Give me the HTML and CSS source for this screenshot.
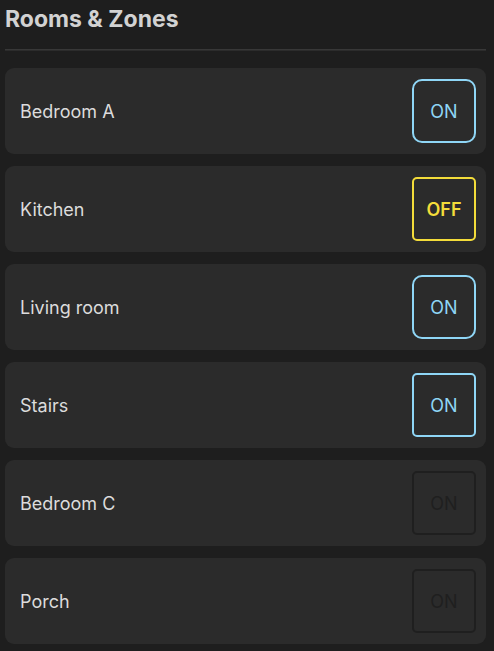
FILE: index.html
```
<!DOCTYPE html>
<html>
<head>
<meta charset="utf-8">
<link rel="stylesheet" href="styles.css">
</head>
<body>
<div class="panel">
  <h1 class="title">Rooms &amp; Zones</h1>
  <div class="divider"></div>
  <div class="list">
    <div class="card"><span class="name">Bedroom A</span><span class="btn on round">ON</span></div>
    <div class="card"><span class="name">Kitchen</span><span class="btn off">OFF</span></div>
    <div class="card"><span class="name">Living room</span><span class="btn on round">ON</span></div>
    <div class="card"><span class="name">Stairs</span><span class="btn on">ON</span></div>
    <div class="card"><span class="name">Bedroom C</span><span class="btn dim">ON</span></div>
    <div class="card"><span class="name">Porch</span><span class="btn dim">ON</span></div>
  </div>
</div>
</body>
</html>
```
FILE: styles.css
```
html, body {
  margin: 0;
  padding: 0;
  background: #1e1e1e;
}
body {
  font-family: Inter, "Liberation Sans", Arial, sans-serif;
  color: #dcdcdc;
}
.panel {
  padding: 0 8px 0 5px;
}
.title {
  margin: 0;
  padding-top: 6px;
  font-size: 23px;
  line-height: 26px;
  font-weight: bold;
  color: #d2d2d2;
}
.divider {
  margin-top: 17px;
  height: 0;
  border-top: 1px solid #383838;
  border-bottom: 1px solid #2c2c2c;
}
.list {
  margin-top: 17px;
  display: flex;
  flex-direction: column;
  gap: 12px;
}
.card {
  background: #2b2b2b;
  border-radius: 9px;
  height: 86px;
  box-sizing: border-box;
  padding: 0 10px 0 15px;
  display: flex;
  align-items: center;
  justify-content: space-between;
}
.name {
  font-size: 18px;
  color: #dcdcdc;
}
.btn {
  width: 64px;
  height: 64px;
  box-sizing: border-box;
  border: 2px solid;
  border-radius: 5px;
  display: flex;
  align-items: center;
  justify-content: center;
  font-size: 18px;
}
.on {
  border-color: #8fd6f6;
  color: #8fd6f6;
}
.round {
  border-radius: 10px;
}
.off {
  border-color: #f3dc3a;
  color: #f3dc3a;
  font-weight: 600;
}
.dim {
  border-color: #1f1f1f;
  color: #1f1f1f;
}
```
